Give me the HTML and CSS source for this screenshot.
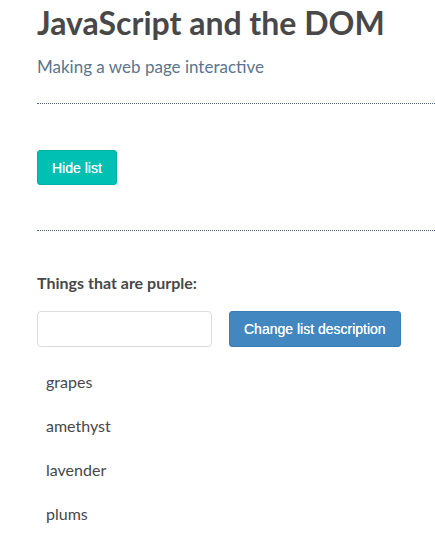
FILE: index.html
```html
<!DOCTYPE html>
<html>
<head>
<meta charset="utf-8">
<link rel="stylesheet" href="styles.css">
</head>
<body>
<div class="page">
  <h1 class="title">JavaScript and the DOM</h1>
  <p class="subtitle">Making a web page interactive</p>
  <hr class="rule rule-top">
  <button class="btn btn-teal">Hide list</button>
  <hr class="rule rule-bottom">
  <div class="list-section">
    <p class="list-heading">Things that are purple:</p>
    <div class="controls">
      <input class="field" type="text">
      <button class="btn btn-blue">Change list description</button>
    </div>
    <ul class="items">
      <li>grapes</li>
      <li>amethyst</li>
      <li>lavender</li>
      <li>plums</li>
    </ul>
  </div>
</div>
</body>
</html>
```
FILE: styles.css
```css
html, body {
  margin: 0;
  padding: 0;
  background: #fff;
}
body {
  font-family: Lato, "Open Sans", sans-serif;
  color: #484848;
  overflow: hidden;
}
.page {
  padding-left: 37px;
}
.title {
  margin: 3px 0 0;
  font-size: 32px;
  line-height: 40px;
  font-weight: 700;
  color: #484848;
}
.subtitle {
  margin: 14px 0 0;
  font-size: 17px;
  line-height: 20px;
  color: #5b7490;
}
.rule {
  border: 0;
  border-top: 1px dotted #4f6680;
  margin: 0;
  height: 0;
}
.rule-top {
  margin-top: 26px;
}
.btn {
  display: block;
  height: 36px;
  padding: 0 14px;
  border-radius: 3px;
  font-family: "Liberation Sans", Arial, sans-serif;
  font-size: 14px;
  color: #fff;
  text-shadow: 0 0 0.4px #fff;
  cursor: pointer;
}
.btn-teal {
  margin-top: 46px;
  height: 35px;
  background: #00bfb3;
  border: 1px solid #00b0a5;
}
.rule-bottom {
  margin-top: 45px;
}
.list-heading {
  margin: 42px 0 0;
  font-size: 16px;
  line-height: 20px;
  font-weight: 700;
}
.controls {
  display: flex;
  gap: 17px;
  margin-top: 18px;
}
.field {
  width: 175px;
  height: 36px;
  box-sizing: border-box;
  border: 1px solid #dcdcdc;
  border-radius: 4px;
  margin: 0;
}
.btn-blue {
  background: #4387c1;
  border: 1px solid #3d7db5;
}
.items {
  list-style: none;
  margin: 13px 0 0;
  padding: 0 0 0 9px;
}
.items li {
  font-size: 16px;
  line-height: 44px;
}
```
